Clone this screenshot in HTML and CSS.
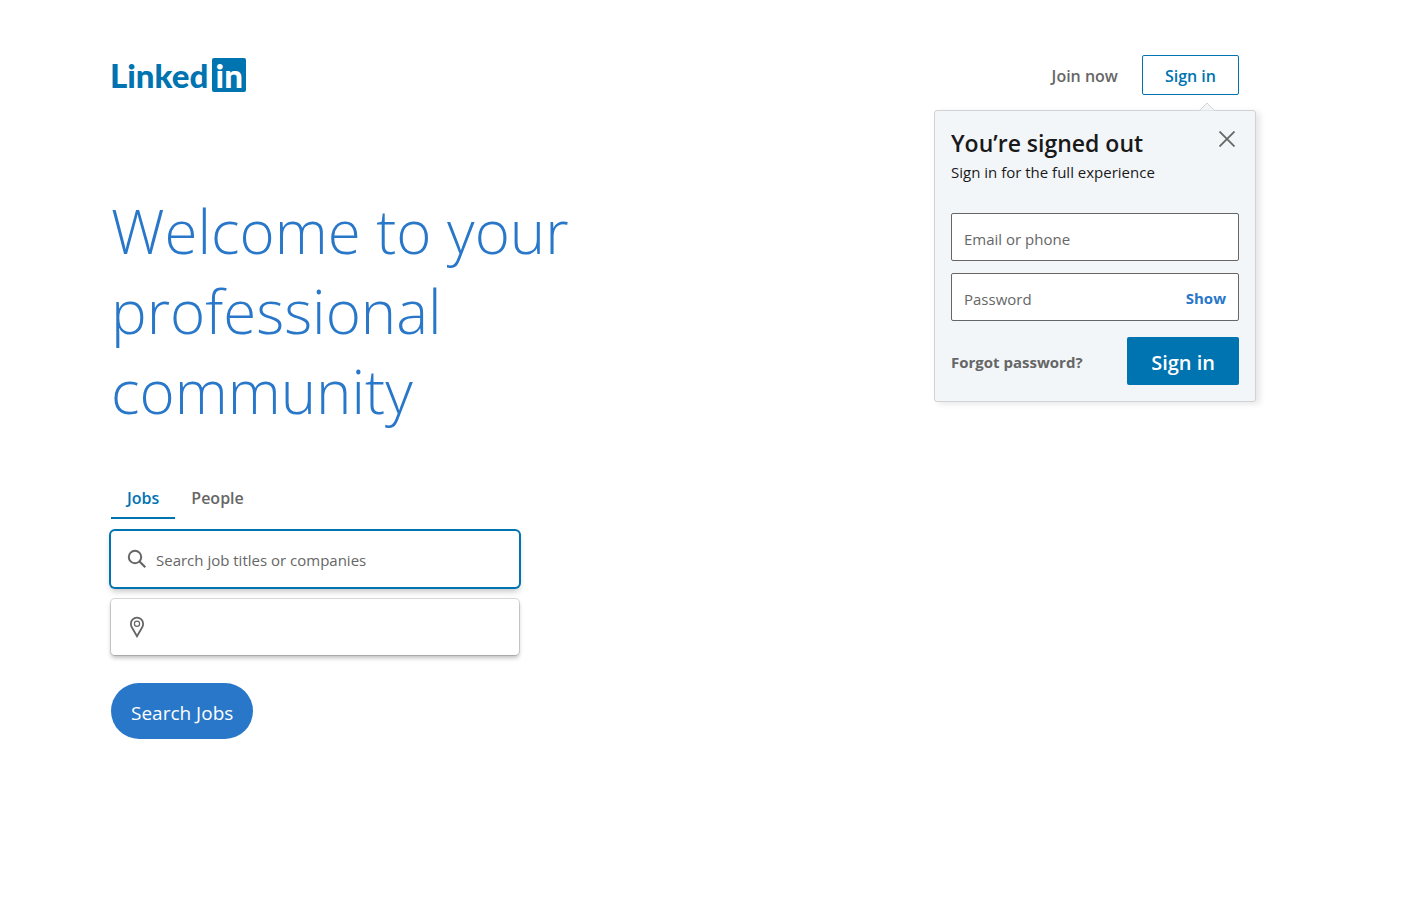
FILE: index.html
```html
<!DOCTYPE html>
<html lang="en">
<head>
<meta charset="utf-8">
<meta name="viewport" content="width=device-width, initial-scale=1">
<title>LinkedIn: Log In or Sign Up</title>
<link rel="stylesheet" href="styles.css">
</head>
<body>
<div class="page">
  <header class="header">
    <a class="logo" href="#" aria-label="LinkedIn">
      <span class="logo-word">Linked</span><span class="logo-mark">in</span>
    </a>
    <nav class="nav">
      <a class="join" href="#">Join now</a>
      <div class="signin">
        <a class="signin-link" href="#">Sign in</a>
        <section class="popover" aria-labelledby="popover-title">
          <svg class="caret" width="16" height="9" viewBox="0 0 16 9" aria-hidden="true"><path d="M0.5 8.5L8 1l7.5 7.5" fill="#f3f6f9" stroke="#d2d4d6"/></svg>
          <div class="popover-head">
            <div>
              <h2 class="popover-title" id="popover-title">You’re signed out</h2>
              <p class="popover-sub">Sign in for the full experience</p>
            </div>
            <button class="close" type="button" aria-label="Close">
              <svg width="16" height="16" viewBox="0 0 16 16" aria-hidden="true"><path d="M0.5 0.5l15 15M15.500 0.500l-15 15" stroke="#666" stroke-width="1.800"/></svg>
            </button>
          </div>
          <form class="login">
            <div class="field">
              <input class="field-input" type="text" aria-label="Email or phone" placeholder="Email or phone">
            </div>
            <div class="field">
              <input class="field-input" type="password" aria-label="Password" placeholder="Password">
              <button class="show" type="button">Show</button>
            </div>
            <div class="login-actions">
              <a class="forgot" href="#">Forgot password?</a>
              <button class="submit" type="submit">Sign in</button>
            </div>
          </form>
        </section>
      </div>
    </nav>
  </header>
  <main class="hero">
    <h1 class="headline">Welcome to your professional community</h1>
    <div class="tabs" role="tablist">
      <button class="tab tab-active" type="button" role="tab" aria-selected="true">Jobs</button>
      <button class="tab" type="button" role="tab" aria-selected="false">People</button>
    </div>
    <form class="search">
      <div class="search-box search-box-active">
        <svg class="icon" width="20" height="20" viewBox="0 0 20 20" aria-hidden="true"><circle cx="8" cy="8" r="6.200" fill="none" stroke="#666" stroke-width="2"/><path d="M12.300 12.300l6 6" stroke="#666" stroke-width="2.200"/></svg>
        <input class="search-input" type="text" aria-label="Search job titles or companies" placeholder="Search job titles or companies">
      </div>
      <div class="search-box">
        <svg class="icon" width="20" height="22" viewBox="0 0 20 22" aria-hidden="true"><path d="M10 20.300L4.800 11.300C3.900 9.800 3.900 8.700 3.900 7.700a6.100 6.100 0 0 1 12.200 0c0 1 0 2.100-.9 3.600z" fill="none" stroke="#666" stroke-width="1.800"/><circle cx="10" cy="7.700" r="2.600" fill="none" stroke="#666" stroke-width="1.200"/></svg>
        <input class="search-input" type="text" aria-label="Location">
      </div>
      <button class="search-button" type="submit">Search Jobs</button>
    </form>
  </main>
</div>
</body>
</html>
```
FILE: styles.css
```css
* { box-sizing: border-box; }
body {
  margin: 0;
  background: #fff;
  color: #191919;
  font-family: "Open Sans", "Noto Sans", sans-serif;
  font-size: 15px;
  line-height: 24px;
}
h1, h2, p { margin: 0; }
a { color: inherit; text-decoration: none; }
button, input { font: inherit; }
button { border: 0; padding: 0; background: none; cursor: pointer; }

.page {
  max-width: 1402px;
  padding: 55px 163px 48px 110px;
}

.header { display: flex; justify-content: space-between; align-items: center; }
.logo {
  display: flex;
  align-items: center;
  gap: 4px;
  color: #0073b1;
  font-family: Lato, sans-serif;
  font-size: 33px;
  font-weight: 900;
  line-height: 34px;
}
.logo-mark {
  width: 34px;
  height: 34px;
  border-radius: 2px;
  background: #0073b1;
  color: #fff;
  text-align: center;
}

.nav { display: flex; align-items: center; gap: 24px; color: #666; font-size: 16px; font-weight: 600; }
.join { padding-top: 2px; }
.signin { position: relative; }
.signin-link {
  display: block;
  padding: 8px 22px 6px;
  border: 1px solid #0073b1;
  border-radius: 2px;
  color: #0073b1;
}

.popover {
  position: absolute;
  top: 55px;
  right: -17px;
  width: 322px;
  padding: 16px;
  border: 1px solid #d0d2d4;
  border-radius: 3px;
  background: #f3f6f9;
  box-shadow: 4px 2px 6px rgba(0, 0, 0, 0.1);
  color: #191919;
  font-size: 15px;
  font-weight: 400;
}
.caret { position: absolute; top: -9px; right: 40px; }
.popover-head { display: flex; justify-content: space-between; align-items: flex-start; }
.popover-title { font-size: 23px; font-weight: 600; line-height: 33px; }
.close { display: flex; padding: 4px; }
.login { display: flex; flex-direction: column; gap: 12px; margin-top: 29px; }
.field {
  display: flex;
  align-items: center;
  height: 48px;
  padding: 0 12px;
  border: 1px solid #666;
  border-radius: 2px;
  background: #fff;
}
.field-input, .search-input {
  flex: 1;
  min-width: 0;
  border: 0;
  padding: 4px 0 0;
  outline: 0;
  background: transparent;
  color: #191919;
}
::placeholder { color: #666; opacity: 1; }
.show { padding-top: 2px; color: #2977c9; font-weight: 700; }
.login-actions { display: flex; justify-content: space-between; align-items: center; margin-top: 4px; }
.forgot { padding-top: 2px; color: #666; font-weight: 700; }
.submit {
  height: 48px;
  padding: 4px 24px 0;
  border-radius: 2px;
  background: #0073b1;
  color: #fff;
  font-size: 20px;
  font-weight: 600;
}

.hero { max-width: 490px; padding: 96px 0 0 1px; }
.headline { color: #2977c9; font-size: 60px; font-weight: 300; line-height: 80px; }
.tabs { display: flex; margin-top: 48px; }
.tab {
  padding: 7px 16px;
  border-bottom: 2px solid transparent;
  color: #666;
  font-size: 16px;
  font-weight: 600;
}
.tab-active { border-color: #0073b1; color: #0073b1; }
.search { display: flex; flex-direction: column; align-items: flex-start; gap: 12px; max-width: 408px; margin-top: 12px; }
.search-box {
  display: flex;
  align-items: center;
  gap: 9px;
  width: 100%;
  height: 56px;
  padding: 0 16px;
  border-radius: 4px;
  box-shadow: 0 0 0 1px rgba(0, 0, 0, 0.15), 0 3px 4px rgba(0, 0, 0, 0.25);
}
.search-box-active { box-shadow: 0 0 0 2px #0073b1, 0 4px 6px rgba(0, 0, 0, 0.25); }
.search-input { padding-top: 2px; }
.icon { flex: none; }
.search-button {
  height: 56px;
  margin-top: 16px;
  padding: 4px 20px 0;
  border-radius: 28px;
  background: #2977c9;
  color: #fff;
  font-size: 19px;
}
```
